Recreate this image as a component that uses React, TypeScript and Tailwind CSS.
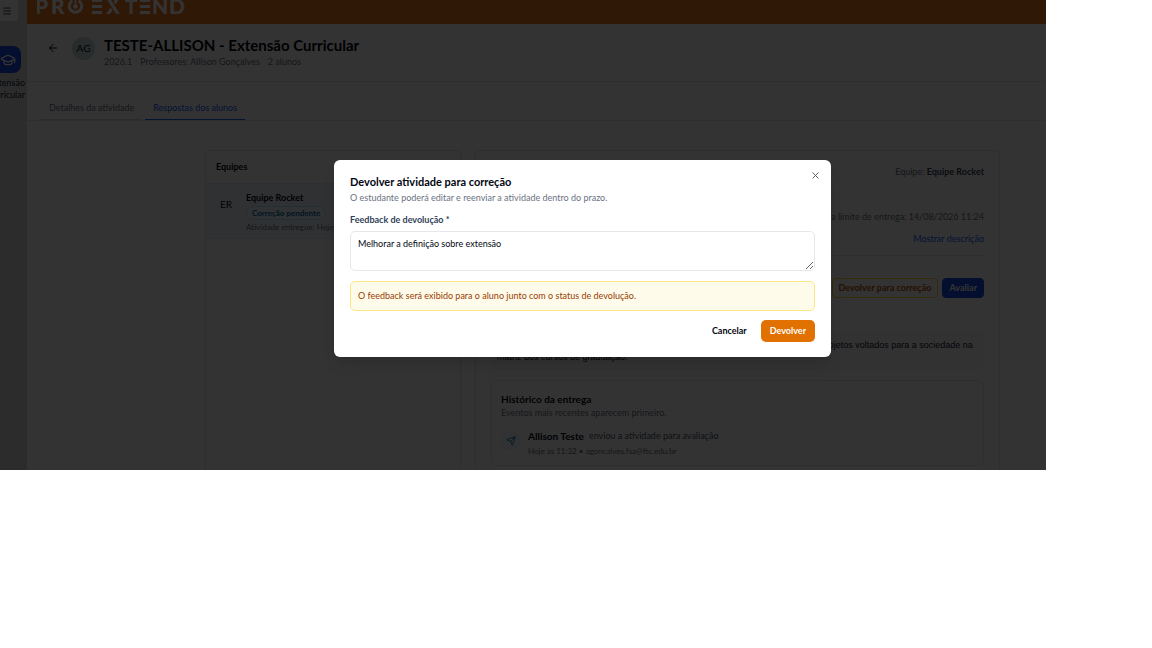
import type { ReactNode } from "react";
import { ArrowLeft, GraduationCap, Menu, Send, X } from "lucide-react";

function Logo() {
  return (
    <svg
      role="img"
      aria-label="Pro Extend"
      width="150"
      height="16"
      viewBox="0 0 150 16"
      fill="#fff"
      className="font-['Lato',sans-serif] text-[21px] font-black"
    >
      <text x="-2" y="14">P</text>
      <text x="14" y="14">R</text>
      <path d="M35.500 0.700a6.200 6.200 0 1 0 6 0" fill="none" stroke="#fff" strokeWidth="3" />
      <circle cx="38.500" cy="6.500" r="2.300" />
      <path d="M37.700 -1h1.600v6h-1.600z" />
      <path d="M55 -1h10v3h-10zM55 5.100h10v3h-10zM55 11h10v3h-10z" />
      <path d="M69 -2h4l10 16h-4zM79 -2h4l-4.500 6.500-2-3zM69 14l4.500-6.500 2 3-2.500 3.500z" />
      <path d="M88 -1h12v3h-4.500v12h-3v-12h-4.500z" />
      <path d="M103 -1h10v3h-10zM103 5.100h10v3h-10zM103 11h10v3h-10z" />
      <text x="115" y="14">N</text>
      <text x="132" y="14">D</text>
    </svg>
  );
}

function Sidebar() {
  return (
    <aside className="flex w-[27px] shrink-0 flex-col items-end bg-[#dcdcdc]">
      <button
        type="button"
        aria-label="Menu"
        className="flex h-[21px] w-[18px] items-center justify-start self-start rounded-br bg-white pl-[2px] text-gray-900"
      >
        <Menu className="size-[10px] shrink-0" />
      </button>
      <a href="#extensao" className="flex flex-col items-center pt-[25px] text-[9px] leading-3 text-gray-900">
        <span className="mr-[6px] flex size-[27px] items-center justify-center self-end rounded-lg bg-[#1447e6] text-white">
          <GraduationCap className="size-4" strokeWidth={2} />
        </span>
        <span className="mt-1 flex flex-col items-end pr-[2px]">
          <span>Extensão</span>
          <span>Curricular</span>
        </span>
      </a>
    </aside>
  );
}

function PageHeader() {
  return (
    <div className="flex h-[58px] items-start border-b border-gray-200 pt-3 pl-5">
      <button type="button" aria-label="Voltar" className="mt-[6px] text-gray-950">
        <ArrowLeft className="size-3" />
      </button>
      <span className="mt-px ml-[13px] flex size-[23px] items-center justify-center rounded-full bg-[#cbdcdc] text-[10px] text-gray-950">
        AG
      </span>
      <div className="ml-[9px]">
        <h1 className="text-[15px] leading-[18px] font-bold text-gray-950">TESTE-ALLISON - Extensão Curricular</h1>
        <p className="flex gap-2 text-[9px] leading-4 text-gray-500">
          <span>2026.1</span>
          <span>Professores: Allison Gonçalves</span>
          <span>2 alunos</span>
        </p>
      </div>
    </div>
  );
}

function Tabs() {
  return (
    <nav className="mt-4 flex gap-[3px] border-b border-gray-200 pl-[14px] text-[9px]">
      <a href="#detalhes" className="border-b border-gray-300 px-2 pt-1 pb-[5px] leading-3 text-gray-500">
        Detalhes da atividade
      </a>
      <a href="#respostas" className="border-b border-[#155dfc] px-2 pt-1 pb-[5px] leading-3 text-[#155dfc]">
        Respostas dos alunos
      </a>
    </nav>
  );
}

function Teams() {
  return (
    <section className="rounded-t border border-b-0 border-gray-200">
      <h2 className="px-[10px] py-[10px] text-[9px] leading-3 font-bold text-gray-950">Equipes</h2>
      <button
        type="button"
        className="flex w-full items-start border-y border-blue-100 bg-[#eff6ff] px-[14px] pt-[7px] pb-1 text-left text-[9px] leading-[14px] text-gray-950"
      >
        <span className="mt-[6px] w-[26px] text-[10px]">ER</span>
        <span className="flex flex-col items-start whitespace-nowrap">
          <span className="font-bold">Equipe Rocket</span>
          <span className="mt-px rounded-full border border-sky-200 bg-sky-50 px-[5px] text-[8px] leading-3 font-bold text-sky-700">
            Correção pendente
          </span>
          <span className="text-[8px] text-gray-500">Atividade entregue: Hoje as 11:32</span>
        </span>
      </button>
    </section>
  );
}

function Submission() {
  return (
    <section className="rounded-t border border-b-0 border-gray-200 px-[15px] pt-[14px] pb-1 text-[9px] leading-[14px] text-gray-500">
      <p className="text-right">
        Equipe: <strong className="font-bold text-gray-700">Equipe Rocket</strong>
      </p>
      <p className="mt-[31px] text-right">Data limite de entrega: 14/08/2026 11:24</p>
      <div className="flex justify-end border-b border-gray-200 pt-2 pb-[9px]">
        <a href="#descricao" className="text-[#155dfc]">Mostrar descrição</a>
      </div>
      <div className="mt-[22px] flex justify-end gap-1">
        <Action className="border-amber-300 text-[#bb4d00]">Devolver para correção</Action>
        <Action className="border-[#1447e6] bg-[#1447e6] text-white">Avaliar</Action>
      </div>
      <p className="mt-[34px] rounded bg-gray-50 px-[6px] py-[7px] font-['Liberation_Sans',sans-serif] text-[9px] leading-3 text-gray-900">
        A extensão curricular acadêmica compreende o conjunto de ações, programas e projetos voltados para a sociedade na{" "}
        <span className="whitespace-nowrap">matriz dos cursos de graduação.</span>
      </p>
      <div className="mt-[10px] rounded-md border border-gray-200 px-[9px] pt-[11px] pb-[7px]">
        <h2 className="text-[10px] leading-[14px] font-bold text-gray-950">Histórico da entrega</h2>
        <p className="leading-[14px]">Eventos mais recentes aparecem primeiro.</p>
        <div className="mt-2 flex items-start gap-2">
          <span className="mt-[3px] flex size-[19px] items-center justify-center rounded-full border border-sky-100 bg-sky-50 text-sky-700">
            <Send className="size-[10px]" />
          </span>
          <div>
            <p className="flex gap-[5px] leading-4 text-gray-600">
              <strong className="text-[10px] font-bold text-gray-950">Allison Teste</strong>
              enviou a atividade para avaliação
            </p>
            <p className="text-[8px] leading-[14px]">Hoje as 11:32 • agoncalves.fsa@ftc.edu.br</p>
          </div>
        </div>
      </div>
    </section>
  );
}

function Action({ className, children }: { className: string; children: ReactNode }) {
  return (
    <button type="button" className={`rounded border px-[6px] py-[2px] leading-[14px] font-bold ${className}`}>
      {children}
    </button>
  );
}

function ReturnDialog() {
  return (
    <div className="absolute inset-0 flex items-start justify-center bg-black/80 pt-[160px] pl-[119px]">
      <div
        role="dialog"
        aria-modal="true"
        aria-labelledby="dialog-title"
        className="relative w-[497px] rounded-md bg-white px-4 pt-[14px] pb-[15px] text-[9px] shadow-lg"
      >
        <button type="button" aria-label="Fechar" className="absolute top-[10px] right-[10px] text-gray-600">
          <X className="size-[11px]" />
        </button>
        <h2 id="dialog-title" className="text-[11px] leading-4 font-bold text-gray-950">
          Devolver atividade para correção
        </h2>
        <p className="leading-4 text-gray-500">O estudante poderá editar e reenviar a atividade dentro do prazo.</p>
        <label htmlFor="feedback" className="mt-[6px] block leading-4 font-bold text-slate-700">
          Feedback de devolução *
        </label>
        <textarea
          id="feedback"
          defaultValue="Melhorar a definição sobre extensão"
          className="mt-[3px] block h-10 w-full rounded-[5px] border border-gray-200 px-[7px] py-[5px] leading-[13px] text-gray-950 outline-none"
        />
        <p className="mt-[10px] rounded-[5px] border border-[#fee685] bg-[#fffbeb] px-[7px] py-[6px] leading-4 text-[#973c00]">
          O feedback será exibido para o aluno junto com o status de devolução.
        </p>
        <div className="mt-[9px] flex justify-end gap-[5px] font-bold">
          <button type="button" className="rounded-[5px] px-[9px] py-1 leading-[14px] text-gray-950">
            Cancelar
          </button>
          <button type="button" className="rounded-[5px] bg-[#e17100] px-[9px] py-1 leading-[14px] text-white">
            Devolver
          </button>
        </div>
      </div>
    </div>
  );
}

export default function App() {
  return (
    <div className="min-h-screen bg-white font-['Lato','Open_Sans',sans-serif]">
      <div className="relative mr-[106px] flex overflow-hidden bg-white">
        <Sidebar />
        <main className="min-w-0 flex-1">
          <header className="h-6 bg-[#f07820] pl-[10px]">
            <Logo />
          </header>
          <PageHeader />
          <Tabs />
          <div className="mt-[29px] mr-[46px] ml-[178px] grid grid-cols-[256px_1fr] gap-[14px]">
            <Teams />
            <Submission />
          </div>
        </main>
        <ReturnDialog />
      </div>
    </div>
  );
}
